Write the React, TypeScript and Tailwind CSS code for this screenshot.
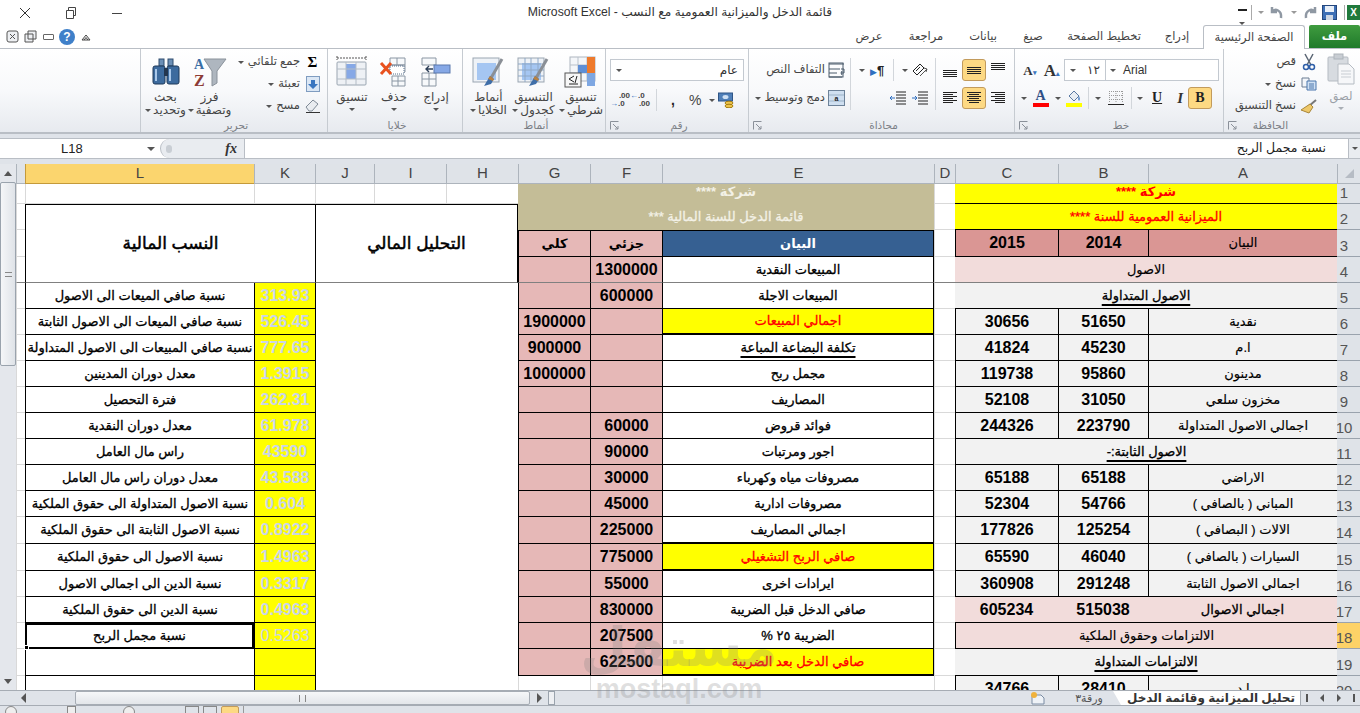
import React from 'react';

const GRID = 'border-b border-l border-[#d9d9d9]';
const BOX = 'border-b border-l border-black';
const NUM = 'text-[16px] font-bold text-black';
const AR = 'text-[13px] text-black [-webkit-text-stroke:0.3px_currentColor]';
const AR_LIGHT = 'text-[13px] text-black [-webkit-text-stroke:0.15px_currentColor]';
const AR_BOLD = 'text-[13px] font-bold text-black';
const UL = 'underline decoration-2 underline-offset-[4px]';

const ratios = [
  ['نسبة صافي الميعات الى الاصول', '313.93'],
  ['نسبة صافي الميعات الى الاصول الثابتة', '526.45'],
  ['نسبة صافي المبيعات الى الاصول المتداولة', '777.65'],
  ['معدل دوران المدينين', '1.3915'],
  ['فترة التحصيل', '262.31'],
  ['معدل دوران النقدية', '61.978'],
  ['راس مال العامل', '43590'],
  ['معدل دوران راس مال العامل', '43.588'],
  ['نسبة الاصول المتداولة الى حقوق الملكية', '0.604'],
  ['نسبة الاصول الثابتة  الى حقوق الملكية', '0.8922'],
  ['نسبة الاصول الى حقوق الملكية', '1.4963'],
  ['نسبة الدين الى اجمالي  الاصول', '0.3317'],
  ['نسبة الدين الى حقوق الملكية', '0.4963'],
  ['نسبة مجمل الربح', '0.5263'],
  ['', ''],
  ['', ''],
];

// E, F, G from row 4 down to row 19; row 20 is empty
const income: [string, string, string, string?][] = [
  ['المبيعات النقدية', '1300000', ''],
  ['المبيعات الاجلة', '600000', ''],
  ['اجمالي المبيعات', '', '1900000', 'total'],
  ['تكلفة البضاعة المباعة', '', '900000', 'line'],
  ['مجمل ربح', '', '1000000'],
  ['المصاريف', '', ''],
  ['فوائد قروض', '60000', ''],
  ['اجور ومرتبات', '90000', ''],
  ['مصروفات مياه وكهرباء', '30000', ''],
  ['مصروفات ادارية', '45000', ''],
  ['اجمالي المصاريف', '225000', '', 'thick'],
  ['صافي الربح التشغيلي', '775000', '', 'total'],
  ['ايرادات اخرى', '55000', ''],
  ['صافي الدخل قبل الضريبة', '830000', ''],
  ['الضريبة ٢٥ %', '207500', ''],
  ['صافي الدخل بعد الضريبة', '622500', '', 'total'],
];

type Bal = { merged?: string; cls?: string; a?: string; b?: string; c?: string; pink?: boolean };
const balance: Bal[] = [
  { a: 'نقدية', b: '51650', c: '30656' },
  { a: 'ا.م', b: '45230', c: '41824' },
  { a: 'مدينون', b: '95860', c: '119738' },
  { a: 'مخزون سلعي', b: '31050', c: '52108' },
  { a: 'اجمالي الاصول المتداولة', b: '223790', c: '244326' },
  { merged: 'الاصول الثابتة:-', cls: `${BOX} bg-[#f2f2f2]` },
  { a: 'الاراضي', b: '65188', c: '65188' },
  { a: 'المباني ( بالصافي )', b: '54766', c: '52304' },
  { a: 'الالات ( البصافي )', b: '125254', c: '177826' },
  { a: 'السيارات ( بالصافي )', b: '46040', c: '65590' },
  { a: 'اجمالي الاصول الثابتة', b: '291248', c: '360908' },
  { a: 'اجمالي الاصوال', b: '515038', c: '605234', pink: true },
  { merged: 'الالتزامات وحقوق الملكية', cls: `${BOX} bg-[#f2dcdb]` },
  { merged: 'الالتزامات المتداولة', cls: 'border-b border-black bg-[#f2f2f2]' },
  { a: 'ا.د', b: '28410', c: '34766' },
];

function Cell({ className = '', children }: { className?: string; children?: React.ReactNode }) {
  return <div className={`flex items-center justify-center overflow-hidden whitespace-nowrap ${className}`}>{children}</div>;
}

function RowHead({ n, active }: { n: number; active?: boolean }) {
  return (
    <div className={`flex items-end overflow-hidden border-b border-[#9aa3ad] ${active ? 'bg-[#fdd267]' : 'bg-[#dfe3e8]'}`}>
      <span dir="ltr" className="w-[32px] shrink-0 text-center text-[15px] leading-[20px] text-[#555]">{n}</span>
    </div>
  );
}

function ColHead({ name, active }: { name: string; active?: boolean }) {
  return (
    <div className={`flex items-center justify-center border-b border-l text-[15px] text-[#444] ${active ? 'border-[#c49a3a] bg-[#fbd56e]' : 'border-[#adb4bc] bg-[#dfe3e8]'}`}>
      {name}
    </div>
  );
}

function Caret({ className = '' }: { className?: string }) {
  return <span className={`inline-block h-0 w-0 shrink-0 border-x-[3px] border-t-[3px] border-x-transparent border-t-[#555] ${className}`} />;
}

function Launcher() {
  return (
    <svg width="9" height="9" viewBox="0 0 9 9" className="shrink-0" fill="none" stroke="#8a9099">
      <path d="M.5 8.5v-8h8M3 3l5 5M8 5v3H5" />
    </svg>
  );
}

function Group({ label, launcher, className, children }: { label: string; launcher?: boolean; className: string; children: React.ReactNode }) {
  return (
    <div className={`flex flex-col border-r border-[#c6cbd1] ${className}`}>
      <div className="h-[70px]">{children}</div>
      <div className="flex h-[13px] items-center pl-[4px]">
        {launcher ? <Launcher /> : <span className="w-[9px]" />}
        <span className="flex-1 pr-[9px] text-center text-[10.5px] text-[#7b7f86]">{label}</span>
      </div>
    </div>
  );
}

function BigBtn({ icon, l1, l2, caretLine, width = 'w-[45px]' }: { icon: React.ReactNode; l1: string; l2?: string; caretLine?: boolean; width?: string }) {
  return (
    <div className={`flex shrink-0 flex-col items-center ${width}`}>
      <div className="flex h-[36px] items-center justify-center">{icon}</div>
      <div className="whitespace-nowrap text-[12px] leading-[14px] text-[#444]">{l1}</div>
      {l2 && (
        <div className="flex items-center gap-[2px] whitespace-nowrap text-[12px] leading-[13px] text-[#444]">
          <Caret />
          <span>{l2}</span>
        </div>
      )}
      {caretLine && <Caret className="mt-[4px]" />}
    </div>
  );
}

function ListRow({ icon, text, caret }: { icon: React.ReactNode; text: string; caret?: boolean }) {
  return (
    <div className="flex h-[22px] items-center justify-end gap-[4px] text-[11.5px] text-[#444]">
      {caret && <Caret />}
      <span className="whitespace-nowrap">{text}</span>
      <span className="flex w-[17px] justify-center">{icon}</span>
    </div>
  );
}

function Lines({ rows }: { rows: [number, number, number][] }) {
  return (
    <svg width="16" height="16" viewBox="0 0 16 16" stroke="#222" strokeWidth="1">
      {rows.map(([y, a, b]) => <path key={y} d={`M${a} ${y + 0.5}H${b}`} />)}
    </svg>
  );
}

function Toggle({ on, children }: { on?: boolean; children: React.ReactNode }) {
  return (
    <div className={`flex h-[22px] w-[24px] items-center justify-center rounded-[3px] ${on ? 'border border-[#c29b5c] bg-[#fdd983]' : ''}`}>
      {children}
    </div>
  );
}

const BrushOver = ({ cells }: { cells?: boolean }) => (
  <svg width="36" height="34" viewBox="0 0 36 34">
    <rect x="2" y="3" width="26" height="24" fill="#eef2f7" stroke="#9aa5b1" />
    <rect x="6" y="8" width="19" height="17" fill="#a5c6f2" />
    {cells && <path d="M2 9h26M2 15h26M2 21h26M9 3v24M15 3v24M22 3v24" stroke="#8fa8c6" fill="none" />}
    <path d="M31 4L20 23" stroke="#8a8f96" strokeWidth="3" />
    <path d="M19 21l4 3-3 5-7 2z" fill="#3f6ea8" />
    <path d="M19 21l4 3-1 2-5-2z" fill="#b98140" />
  </svg>
);

function Ribbon() {
  return (
    <div className="flex h-[85px] border-b-2 border-[#b9bec5] bg-gradient-to-b from-white via-[#f8f9fb] to-[#e7eaef]">
      <div className="w-[141px] border-r border-[#c6cbd1]" />

      <Group label="تحرير" className="w-[187px]">
        <div className="flex pl-[2px] pt-[5px]">
          <BigBtn
            l1="بحث"
            l2="وتحديد"
            icon={
              <svg width="30" height="28" viewBox="0 0 30 28">
                <rect x="8" y="1" width="5" height="7" fill="#6b8fb6" stroke="#2f4c6e" />
                <rect x="17" y="1" width="5" height="7" fill="#6b8fb6" stroke="#2f4c6e" />
                <rect x="2" y="8" width="12" height="18" rx="2" fill="#3d6b9e" stroke="#1f3a5a" />
                <rect x="16" y="8" width="12" height="18" rx="2" fill="#3d6b9e" stroke="#1f3a5a" />
                <rect x="13" y="10" width="4" height="8" fill="#23364e" />
                <path d="M5 11v12M19 11v12" stroke="#a9c8ea" strokeWidth="2" />
              </svg>
            }
          />
          <BigBtn
            width="w-[43px]"
            l1="فرز"
            l2="وتصفية"
            icon={
              <svg width="34" height="32" viewBox="0 0 34 32">
                <path d="M11 3h22L24 15v12l-5 3V15z" fill="#aeb6bf" stroke="#8a929b" />
                <text x="1" y="13" fontSize="14" fontWeight="700" fontFamily="Liberation Serif" fill="#3a6ea5">A</text>
                <text x="1" y="30" fontSize="16" fontWeight="700" fontFamily="Liberation Serif" fill="#8c3b36">Z</text>
              </svg>
            }
          />
          <div className="-mt-[3px] flex-1 pr-[6px]">
            <ListRow text="جمع تلقائي" caret icon={<span className="font-['Liberation_Serif'] text-[15px] font-bold leading-none text-black">Σ</span>} />
            <ListRow
              text="تعبئة"
              caret
              icon={
                <svg width="14" height="16" viewBox="0 0 14 16">
                  <rect x=".5" y=".5" width="13" height="15" fill="#dbe7f5" stroke="#7f9cc0" />
                  <path d="M5 4h4v4h3l-5 5-5-5h3z" fill="#3a76c0" />
                </svg>
              }
            />
            <ListRow
              text="مسح"
              caret
              icon={
                <svg width="16" height="14" viewBox="0 0 16 14">
                  <path d="M1 8l7-7 5 4-6 7H4z" fill="#e9ecf0" stroke="#7f8a96" />
                  <path d="M1 13.5h14" stroke="#333" />
                </svg>
              }
            />
          </div>
        </div>
      </Group>

      <Group label="خلايا" className="w-[135px]">
        <div className="flex pl-[3px] pt-[5px]">
          <BigBtn
            width="w-[42px]"
            l1="تنسيق"
            caretLine
            icon={
              <svg width="36" height="34" viewBox="0 0 36 34">
                <path d="M3 3h29M3 1v4M32 1v4" stroke="#555" strokeDasharray="2 1" fill="none" />
                <rect x="3" y="7" width="29" height="23" fill="#eef1f5" stroke="#9aa5b1" rx="1" />
                <rect x="12" y="9" width="10" height="15" fill="#86a8e6" />
                <path d="M3 14h29M3 24h29M12 7v23M22 7v23" stroke="#b3bcc6" fill="none" />
              </svg>
            }
          />
          <BigBtn
            width="w-[42px]"
            l1="حذف"
            caretLine
            icon={
              <svg width="32" height="32" viewBox="0 0 32 32">
                <path d="M12 2h15v7H12zM12 9h15v7H12zM14 20h13v10H14zM20 20v10M14 25h13M19 2v7" fill="#f7f9fb" stroke="#8a96a3" />
                <rect x="12" y="10" width="14" height="8" fill="#fff" stroke="#58708c" strokeDasharray="1 1" />
                <path d="M3 7l10 11M13 7L3 18" stroke="#e8511e" strokeWidth="3" />
              </svg>
            }
          />
          <BigBtn
            width="w-[42px]"
            l1="إدراج"
            caretLine
            icon={
              <svg width="32" height="32" viewBox="0 0 32 32">
                <path d="M2 2h14v7H2zM2 17h14v13H2zM2 23h14M9 17v13" fill="#f7f9fb" stroke="#8a96a3" />
                <rect x="14" y="9" width="16" height="8" fill="#86a8e6" stroke="#5a79ad" />
                <path d="M6 13h7M9 10l-3 3 3 3" stroke="#2c3e57" fill="none" strokeWidth="1.4" />
              </svg>
            }
          />
        </div>
      </Group>

      <Group label="أنماط" className="w-[143px]">
        <div className="flex pl-[3px] pt-[5px]">
          <BigBtn l1="أنماط" l2="الخلايا" icon={<BrushOver />} />
          <BigBtn l1="التنسيق" l2="كجدول" icon={<BrushOver cells />} />
          <BigBtn
            width="w-[50px]"
            l1="تنسيق"
            l2="شرطي"
            icon={
              <svg width="34" height="34" viewBox="0 0 34 34">
                <rect x="6" y="2" width="25" height="24" fill="#f4f6f9" stroke="#aeb6c0" />
                <path d="M6 10h25M6 18h25M14 2v24M23 2v24" stroke="#b9c1ca" />
                <rect x="23" y="2" width="8" height="8" fill="#ee7a2c" />
                <rect x="14" y="10" width="17" height="8" fill="#ee7a2c" />
                <rect x="14" y="10" width="9" height="8" fill="#5f8fd6" />
                <rect x="23" y="18" width="8" height="13" fill="#7ea7e2" />
                <rect x="1" y="18" width="16" height="14" fill="#f7f7f7" stroke="#555" />
                <path d="M10 21l-5 3 5 3M5 29h9M13 21l-2 7" stroke="#222" fill="none" />
              </svg>
            }
          />
        </div>
      </Group>

      <Group label="رقم" launcher className="w-[143px]">
        <div className="flex flex-col px-[4px] pt-[10px]">
          <div className="flex h-[22px] w-[134px] items-center justify-between border border-[#c3c9d0] bg-white px-[5px] text-[12px] text-[#333]">
            <Caret />
            <span>عام</span>
          </div>
          <div className="mt-[8px] flex h-[22px] items-center">
            <span className="flex w-[20px] flex-col text-[8px] font-bold leading-[8px] text-[#444]">
              <span className="text-right">.00</span>
              <span><span className="text-[#2f6fc0]">→</span>.0</span>
            </span>
            <span className="flex w-[20px] flex-col text-[8px] font-bold leading-[8px] text-[#444]">
              <span><span className="text-[#2f6fc0]">←</span>.0</span>
              <span className="text-right">.00</span>
            </span>
            <span className="ml-[6px] h-[22px] w-px bg-[#d2d6db]" />
            <span className="ml-[14px] text-[14px] font-bold leading-none text-[#222]">,</span>
            <span className="ml-[14px] text-[14px] leading-none text-[#444]">%</span>
            <Caret className="ml-[8px]" />
            <svg width="16" height="16" viewBox="0 0 16 16" className="ml-[3px]">
              <rect x=".5" y="1" width="14" height="8" fill="#4f7fb8" stroke="#2f5586" />
              <ellipse cx="7.5" cy="5" rx="3" ry="2" fill="#cfe0f3" />
              <ellipse cx="11" cy="11" rx="4" ry="1.8" fill="#eec44a" stroke="#a67d10" />
              <ellipse cx="11" cy="14" rx="4" ry="1.8" fill="#eec44a" stroke="#a67d10" />
            </svg>
          </div>
        </div>
      </Group>

      <Group label="محاذاة" launcher className="w-[266px]">
        <div className="flex pt-[9px]">
          <div className="h-[52px] w-[102px] border-r border-[#d2d6db] pr-[5px]">
            <div className="flex h-[24px] items-center justify-end gap-[3px] text-[11.5px] text-[#444]">
              <span className="whitespace-nowrap">التفاف النص</span>
              <svg width="17" height="16" viewBox="0 0 17 16" stroke="#4a5a6b" fill="none">
                <path d="M1 2h15M1 7h11M1 11h8M1 15h13" />
                <rect x="1" y="1" width="14" height="14" />
                <path d="M13 7h3v4h-3M14 9l-1 2 1 2" />
              </svg>
            </div>
            <div className="mt-[4px] flex h-[24px] items-center justify-end gap-[3px] text-[11.5px] text-[#444]">
              <Caret />
              <span className="whitespace-nowrap">دمج وتوسيط</span>
              <svg width="17" height="16" viewBox="0 0 17 16">
                <rect x=".5" y=".5" width="16" height="15" fill="#cfdff0" stroke="#6d8299" />
                <path d="M1 5h15M1 11h15" stroke="#9db3c8" />
                <text x="8.5" y="10.5" fontSize="7" fontWeight="700" textAnchor="middle" fill="#222">a</text>
              </svg>
            </div>
          </div>
          <div className="flex h-[52px] w-[85px] flex-col border-r border-[#d2d6db] pl-[8px]">
            <div className="flex h-[24px] items-center">
              <Caret className="mr-[3px]" />
              <span className="ml-[2px] text-[13px] font-bold leading-none text-[#222]"><span className="text-[9px] text-[#2f6fc0]">▶</span>¶</span>
              <span className="ml-[9px] h-[22px] w-px bg-[#d2d6db]" />
              <Caret className="ml-[8px]" />
              <svg width="18" height="16" viewBox="0 0 18 16" className="ml-[3px]" fill="none" stroke="#222">
                <path d="M2 9l7-7 4 4-7 7zM5 9l4-4" />
                <path d="M9 14l7-7M13 6l3 1-1 3" stroke="#555" />
              </svg>
            </div>
            <div className="mt-[4px] flex h-[24px] items-center justify-end gap-[5px] pr-[7px]">
              <svg width="17" height="16" viewBox="0 0 17 16" stroke="#222"><path d="M7 2h10M7 5h10M7 8h10M7 11h10M7 14h10" /><path d="M6 8H1M3 6L1 8l2 2" stroke="#2f6fc0" fill="none" /></svg>
              <svg width="17" height="16" viewBox="0 0 17 16" stroke="#222"><path d="M7 2h10M7 5h10M7 8h10M7 11h10M7 14h10" /><path d="M1 8h5M4 6l2 2-2 2" stroke="#2f6fc0" fill="none" /></svg>
            </div>
          </div>
          <div className="flex w-[78px] flex-col pl-[2px]">
            <div className="flex h-[24px] items-center">
              <Toggle><Lines rows={[[8, 1, 15], [10, 1, 15], [12, 1, 15], [14, 1, 15]]} /></Toggle>
              <Toggle on><Lines rows={[[5, 1, 15], [7, 1, 15], [9, 1, 15], [11, 1, 15]]} /></Toggle>
              <Toggle><Lines rows={[[1, 1, 15], [3, 1, 15], [5, 1, 15], [7, 1, 15]]} /></Toggle>
            </div>
            <div className="mt-[4px] flex h-[24px] items-center">
              <Toggle><Lines rows={[[2, 1, 15], [4, 1, 11], [6, 1, 15], [8, 1, 11], [10, 1, 15], [12, 1, 11]]} /></Toggle>
              <Toggle on><Lines rows={[[2, 1, 15], [4, 3, 13], [6, 1, 15], [8, 3, 13], [10, 1, 15], [12, 3, 13]]} /></Toggle>
              <Toggle><Lines rows={[[2, 1, 15], [4, 5, 15], [6, 1, 15], [8, 5, 15], [10, 1, 15], [12, 5, 15]]} /></Toggle>
            </div>
          </div>
        </div>
      </Group>

      <Group label="خط" launcher className="w-[209px]">
        <div className="flex flex-col pt-[9px]">
          <div className="flex h-[24px] items-center pl-[5px]">
            <span className="relative w-[20px] text-center font-['Liberation_Serif'] text-[13px] font-bold leading-none text-[#333]">A<span className="text-[7px] text-[#3a76c0]">▾</span></span>
            <span className="ml-[1px] w-[22px] text-center font-['Liberation_Serif'] text-[17px] font-bold leading-none text-[#333]">A<span className="text-[7px] text-[#3a76c0]">▴</span></span>
            <div className="ml-[1px] flex h-[22px] w-[42px] items-center justify-between border border-[#c3c9d0] bg-white px-[5px] text-[12px] text-[#333]">
              <Caret />
              <span>١٢</span>
            </div>
            <div className="flex h-[22px] w-[113px] items-center gap-[7px] border-y border-r border-[#c3c9d0] bg-white px-[4px] text-[12px] text-[#333]">
              <Caret />
              <span>Arial</span>
            </div>
          </div>
          <div className="mt-[4px] flex h-[24px] items-center pl-[6px]">
            <Caret />
            <span className="ml-[5px] flex w-[17px] flex-col items-center">
              <span className="font-['Liberation_Serif'] text-[14px] font-bold leading-[14px] text-[#2f4f86]">A</span>
              <span className="h-[4px] w-[16px] bg-[#ff0000]" />
            </span>
            <Caret className="ml-[6px]" />
            <span className="ml-[4px] flex w-[17px] flex-col items-center">
              <svg width="14" height="14" viewBox="0 0 14 14"><path d="M2 7l5-5 5 5-5 5z" fill="#e9eef4" stroke="#5b7aa3" /><path d="M12 7c1 2 1 4 0 5-1-1-1-3 0-5z" fill="#3a76c0" /></svg>
              <span className="h-[4px] w-[16px] bg-[#ffff00]" />
            </span>
            <span className="ml-[6px] h-[22px] w-px bg-[#d2d6db]" />
            <Caret className="ml-[6px]" />
            <svg width="16" height="16" viewBox="0 0 16 16" className="ml-[7px]" fill="none">
              <path d="M1 1.5h14M1 5.5h14M1 9.5h14M1.5 1v12M8 1v12M14.5 1v12" stroke="#999" strokeDasharray="1 1" />
              <path d="M0 14.5h16" stroke="#222" />
            </svg>
            <span className="ml-[7px] h-[22px] w-px bg-[#d2d6db]" />
            <Caret className="ml-[5px]" />
            <span className="ml-[9px] font-['Liberation_Serif'] text-[14px] font-bold leading-none text-[#222] underline">U</span>
            <span className="ml-[15px] font-['Liberation_Serif'] text-[15px] font-bold italic leading-none text-[#333]">I</span>
            <span className="ml-[5px]"><Toggle on><span className="font-['Liberation_Serif'] text-[14px] font-bold leading-none text-[#222]">B</span></Toggle></span>
          </div>
        </div>
      </Group>

      <div className="flex w-[136px] flex-col">
        <div className="flex h-[70px] pt-[2px]">
          <div className="flex-1 pr-[5px]">
            <ListRow
              text="قص"
              icon={
                <svg width="14" height="18" viewBox="0 0 14 18" fill="none">
                  <path d="M3 1l6 11M11 1L5 12" stroke="#5a6573" strokeWidth="1.5" />
                  <circle cx="4" cy="14" r="2.5" stroke="#2f5fa8" strokeWidth="1.5" />
                  <circle cx="10" cy="14" r="2.5" stroke="#2f5fa8" strokeWidth="1.5" />
                </svg>
              }
            />
            <ListRow
              text="نسخ"
              caret
              icon={
                <svg width="16" height="14" viewBox="0 0 16 14">
                  <path d="M1 1h7v9H1z" fill="#f2f5f9" stroke="#6a7d93" />
                  <path d="M6 4h9v9H6z" fill="#cfe0f3" stroke="#4a76ad" />
                  <path d="M8 7h5M8 9h5M8 11h5" stroke="#4a76ad" />
                </svg>
              }
            />
            <ListRow
              text="نسخ التنسيق"
              icon={
                <svg width="17" height="15" viewBox="0 0 17 15">
                  <path d="M16 1L9 7" stroke="#777" strokeWidth="2" />
                  <path d="M10 5l3 3-4 6-8-3z" fill="#eec86a" stroke="#a98638" />
                </svg>
              }
            />
          </div>
          <div className="flex w-[38px] shrink-0 flex-col items-center">
            <svg width="28" height="32" viewBox="0 0 28 32" className="mt-[2px]">
              <rect x="1" y="4" width="20" height="24" rx="1" fill="#d7dbe0" stroke="#b5bbc2" />
              <rect x="7" y="1" width="9" height="5" fill="#c8cdd3" stroke="#adb3ba" />
              <path d="M11 11h11l5 5v15H11z" fill="#f6f7f9" stroke="#b5bbc2" />
              <path d="M14 18h10M14 21h10M14 24h10" stroke="#c8cdd3" />
            </svg>
            <span className="mt-[5px] text-[11.5px] leading-[13px] text-[#9aa0a7]">لصق</span>
            <Caret className="mt-[4px] border-t-[#a9aeb5]" />
          </div>
        </div>
        <div className="flex h-[13px] items-center pl-[4px]">
          <Launcher />
          <span className="flex-1 pr-[56px] text-center text-[10.5px] text-[#7b7f86]">الحافظة</span>
        </div>
      </div>
    </div>
  );
}

function Sheet() {
  return (
    <div className="flex h-[526px] overflow-hidden">
      {/* vertical scrollbar on the left, the sheet reads right to left */}
      <div className="flex w-[16px] shrink-0 flex-col bg-[#e4e7ec]">
        <div className="flex h-[18px] items-center justify-center"><span className="h-0 w-0 border-x-[4px] border-b-[5px] border-x-transparent border-b-[#555]" /></div>
        <div className="flex h-[184px] items-center justify-center rounded-[2px] border border-[#9aa3ad] bg-gradient-to-r from-[#f5f6f8] to-[#dfe3e8]">
          <span className="h-[5px] w-[7px] border-y border-[#888]" />
        </div>
        <div className="flex-1" />
        <div className="flex h-[18px] items-center justify-center"><span className="h-0 w-0 border-x-[4px] border-t-[5px] border-x-transparent border-t-[#555]" /></div>
      </div>

      <div
        dir="rtl"
        className="grid flex-1 grid-cols-[23px_189px_90px_103px_21px_272px_72px_72px_72px_72px_59px_61px_229px_9px] grid-rows-[20px_20px_26px_27px_26px_26px_26px_26px_26px_26px_26px_26px_26px_26px_27px_27px_26px_26px_26px_27px_26px] bg-white"
      >
        {/* column letters */}
        <div className="flex items-center justify-center border-b border-l border-[#adb4bc] bg-[#dfe3e8]">
          <span className="border-b-[9px] border-l-[9px] border-b-[#b6bcc4] border-l-transparent" />
        </div>
        {['A', 'B', 'C', 'D', 'E', 'F', 'G', 'H', 'I', 'J', 'K'].map((c) => <ColHead key={c} name={c} />)}
        <ColHead name="L" active />
        <ColHead name="" />

        {/* row 1 */}
        <RowHead n={1} />
        <Cell className={`col-span-3 border-b border-black bg-[#ffff00] ${AR_BOLD} !text-[#ff0000]`}><span className="-mt-[4px]">شركة ****</span></Cell>
        <Cell className={GRID} />
        <Cell className="col-span-3 bg-[#c4bd97] text-[13px] font-bold text-[#f3f1e6]"><span className="-mt-[4px]">شركة ****</span></Cell>
        <Cell className={GRID} /><Cell className={GRID} /><Cell className={GRID} />
        <Cell className={GRID} /><Cell className={GRID} /><Cell className={GRID} />

        {/* row 2 */}
        <RowHead n={2} />
        <Cell className={`col-span-3 border-b border-black bg-[#ffff00] ${AR} !text-[#ff0000]`}>الميزانية العمومية للسنة ****</Cell>
        <Cell className={GRID} />
        <Cell className="col-span-3 bg-[#c4bd97] text-[13px] text-[#f3f1e6] [-webkit-text-stroke:0.3px_currentColor]">قائمة الدخل للسنة المالية ***</Cell>
        <Cell className="col-span-3 row-span-3 border-x border-t border-black border-b border-b-[#808080] text-[17px] text-black [-webkit-text-stroke:0.5px_currentColor]">التحليل المالي</Cell>
        <Cell className="col-span-2 row-span-3 border-l border-t border-black border-b border-b-[#808080] text-[17px] text-black [-webkit-text-stroke:0.5px_currentColor]">النسب المالية</Cell>
        <Cell className={GRID} />

        {/* row 3 */}
        <RowHead n={3} />
        <Cell className={`${BOX} bg-[#da9694] ${AR_LIGHT}`}>البيان</Cell>
        <Cell className={`${BOX} bg-[#da9694] ${NUM}`}>2014</Cell>
        <Cell className={`${BOX} bg-[#da9694] ${NUM}`}>2015</Cell>
        <Cell className={GRID} />
        <Cell className={`${BOX} border-x border-t bg-[#366092] text-[13px] font-bold text-white`}>البيان</Cell>
        <Cell className={`${BOX} border-t bg-[#e6b8b7] ${AR_BOLD}`}>جزئي</Cell>
        <Cell className={`${BOX} border-t bg-[#e6b8b7] ${AR_BOLD}`}>كلي</Cell>
        <Cell className={GRID} />

        {/* row 4, the frozen panes end under it */}
        <RowHead n={4} />
        <Cell className={`col-span-3 border-b border-b-[#808080] bg-[#f2dcdb] ${AR_LIGHT}`}>الاصول</Cell>
        <Cell className="border-b border-l border-[#d9d9d9] border-b-[#808080]" />
        <Cell className={`border-b border-l border-r border-black border-b-[#808080] bg-white ${AR}`}>المبيعات النقدية</Cell>
        <Cell className={`border-b border-l border-black border-b-[#808080] bg-[#e6b8b7] ${NUM}`}>1300000</Cell>
        <Cell className="border-b border-l border-black border-b-[#808080] bg-[#e6b8b7]" />
        <Cell className="border-b border-l border-[#d9d9d9] border-b-[#808080]" />

        {/* row 5 */}
        <RowHead n={5} />
        <Cell className={`col-span-3 border-b border-black bg-[#f2f2f2] ${AR} ${UL}`}>الاصول المتداولة</Cell>
        <Cell className={GRID} />
        <Cell className={`${BOX} border-r bg-white ${AR}`}>{income[1][0]}</Cell>
        <Cell className={`${BOX} bg-[#e6b8b7] ${NUM}`}>{income[1][1]}</Cell>
        <Cell className={`${BOX} bg-[#e6b8b7]`} />
        <Cell className="col-span-3 row-span-16 border-l border-black bg-white" />
        <Cell className={`${BOX} bg-[#ffff00] ${NUM} !text-[#c9d5e8]`}>{ratios[0][1]}</Cell>
        <Cell className={`${BOX} ${AR}`}>{ratios[0][0]}</Cell>
        <Cell className={GRID} />

        {/* rows 6 to 20 */}
        {balance.map((bal, i) => {
          const inc = income[i + 2] as [string, string, string, string?] | undefined;
          const ratio = ratios[i + 1];
          const rowNo = i + 6;
          const selected = rowNo === 18;
          const kind = inc?.[3];
          const eCls =
            kind === 'total'
              ? `border-b-2 border-l border-r border-black bg-[#ffff00] ${AR} !text-[#ff0000]`
              : kind === 'thick'
                ? `border-b-2 border-l border-r border-black bg-white ${AR}`
                : kind === 'line'
                  ? `${BOX} border-r bg-white ${AR} ${UL}`
                  : inc
                    ? `${BOX} border-r bg-white ${AR}`
                    : GRID;
          return (
            <React.Fragment key={rowNo}>
              <RowHead n={rowNo} active={selected} />
              {bal.merged ? (
                <Cell className={`col-span-3 ${bal.cls} ${bal.merged.startsWith('الالتزامات وحقوق') ? AR_LIGHT : `${AR} ${UL}`}`}>{bal.merged}</Cell>
              ) : bal.pink ? (
                <>
                  <Cell className={`border-b border-black bg-[#f2dcdb] ${AR}`}>{bal.a}</Cell>
                  <Cell className={`border-b border-black bg-[#f2dcdb] ${NUM}`}>{bal.b}</Cell>
                  <Cell className={`border-b border-black bg-[#f2dcdb] ${NUM}`}>{bal.c}</Cell>
                </>
              ) : (
                <>
                  <Cell className={`${BOX} bg-[#f2f2f2] ${AR_LIGHT}`}>{bal.a}</Cell>
                  <Cell className={`${BOX} bg-[#f2f2f2] ${NUM}`}>{bal.b}</Cell>
                  <Cell className={`${BOX} bg-[#f2f2f2] ${NUM}`}>{bal.c}</Cell>
                </>
              )}
              <Cell className={GRID} />
              <Cell className={eCls}>{inc?.[0]}</Cell>
              <Cell className={inc ? `${BOX} bg-[#e6b8b7] ${NUM}` : GRID}>{inc?.[1]}</Cell>
              <Cell className={inc ? `${BOX} bg-[#e6b8b7] ${NUM}` : GRID}>{inc?.[2]}</Cell>
              <Cell className={`${BOX} bg-[#ffff00] text-[16px] text-[#c9d5e8] ${selected ? 'font-normal' : 'font-bold'}`}>{ratio[1]}</Cell>
              {selected ? (
                <div className={`relative flex items-center justify-center border-2 border-black ${AR}`}>
                  {ratio[0]}
                  <span className="absolute -bottom-[3px] -left-[3px] h-[5px] w-[5px] border border-white bg-black" />
                </div>
              ) : (
                <Cell className={`${BOX} ${AR}`}>{ratio[0]}</Cell>
              )}
              <Cell className={GRID} />
            </React.Fragment>
          );
        })}
      </div>
    </div>
  );
}

function BottomBar() {
  return (
    <>
      <div className="flex h-[16px] border-y border-[#a6acb4] bg-[#dfe3e9]">
        <div className="w-[16px]" />
        <div className="flex w-[59px] items-center pl-[5px]"><span className="h-0 w-0 border-y-[5px] border-r-[5px] border-y-transparent border-r-[#555]" /></div>
        <div className="flex w-[455px] items-center justify-center rounded-[2px] border border-[#a6acb4] bg-gradient-to-b from-[#f6f7f9] to-[#e3e6ea]">
          <span className="h-[7px] w-[7px] border-x border-[#888]" />
        </div>
        <div className="flex w-[18px] items-center justify-center"><span className="h-0 w-0 border-y-[5px] border-l-[5px] border-y-transparent border-l-[#555]" /></div>
        <div className="h-[14px] w-[7px] border border-[#9aa3ad] bg-[#eef0f3]" />
        <div className="flex-1" />
        <div className="flex h-[14px] w-[36px] items-center justify-center">
          <svg width="16" height="14" viewBox="0 0 16 14">
            <path d="M3 4h9l3 3v6H3z" fill="#eef2f7" stroke="#7a8ca3" />
            <circle cx="5" cy="4" r="3" fill="#f0b23c" />
          </svg>
        </div>
        <div className="flex w-[58px] items-center justify-center pl-[10px] text-[11px] leading-none text-[#555]">ورقة٣</div>
        <div className="flex h-[14px] w-[187px] items-center justify-end bg-white pr-[5px] text-[12px] font-bold leading-none text-[#333] [clip-path:polygon(0_0,100%_0,100%_100%,8px_100%)]">
          تحليل الميزانية وقائمة الدخل
        </div>
        <div className="flex w-[60px] items-center justify-between border-l border-[#a6acb4] px-[5px]">
          <span className="h-[8px] border-l-2 border-[#555]" />
          <span className="h-0 w-0 border-y-[4px] border-r-[4px] border-y-transparent border-r-[#555]" />
          <span className="h-0 w-0 border-y-[4px] border-l-[4px] border-y-transparent border-l-[#555]" />
          <span className="h-[8px] border-r-2 border-[#555]" />
        </div>
      </div>
      <div className="flex h-[7px] items-start overflow-hidden bg-[#dfe3e9] pl-[5px]">
        <span className="h-[12px] w-[12px] rounded-full border border-[#888] bg-[#eee]" />
        <span className="ml-[50px] h-[12px] w-[9px] border border-[#888] bg-[#eee]" />
        <span className="ml-[47px] h-[12px] w-[12px] rounded-full border border-[#888] bg-[#eee]" />
        <span className="ml-[50px] h-[12px] w-[14px] border border-[#888]" />
        <span className="ml-[4px] h-[12px] w-[14px] border border-[#888]" />
        <span className="ml-[4px] h-[12px] w-[18px] rounded-[2px] border border-[#c29b5c] bg-[#fdd983]" />
        <span className="ml-[4px] h-[12px] w-px bg-[#999]" />
      </div>
    </>
  );
}

export default function App() {
  const tabs = [
    ['عرض', 'w-[52px]'],
    ['مراجعة', 'w-[62px]'],
    ['بيانات', 'w-[52px]'],
    ['صيغ', 'w-[48px]'],
    ['تخطيط الصفحة', 'w-[94px]'],
    ['إدراج', 'w-[52px]'],
  ];
  return (
    <div className="relative h-[713px] w-[1360px] overflow-hidden bg-white font-['Liberation_Sans','DejaVu_Sans',sans-serif]">
      {/* title bar */}
      <div className="grid h-[25px] grid-cols-[1fr_auto_1fr] items-center">
        <div className="flex items-center pl-[18px]">
          <svg width="14" height="14" viewBox="0 0 14 14" stroke="#333" fill="none"><path d="M2 2l10 10M12 2L2 12" /></svg>
          <svg width="12" height="12" viewBox="0 0 12 12" stroke="#444" fill="none" className="ml-[33px]"><path d="M1.5 3.5h7v8h-7zM3.5 3V.5h7v8H9" /></svg>
          <span className="ml-[35px] mt-[2px] h-px w-[10px] bg-[#444]" />
        </div>
        <div dir="rtl" className="text-[12.2px] text-[#333]">قائمة الدخل والميزانية العمومية مع النسب - Microsoft Excel</div>
        <div className="flex items-center justify-end">
          <span className="h-[8px] w-[9px] border-t-2 border-[#222]"><Caret className="mb-[3px] ml-[1px] border-t-[#222]" /></span>
          <span className="ml-[4px] h-[15px] w-px bg-[#aaa]" />
          <Caret className="ml-[6px] border-t-[#999]" />
          <svg width="16" height="15" viewBox="0 0 16 15" fill="none" stroke="#8f98a3" strokeWidth="2.5" className="ml-[5px]"><path d="M3 2v5h5M3 7c3-4 10-2 9 6" /></svg>
          <Caret className="ml-[6px] border-t-[#999]" />
          <svg width="14" height="15" viewBox="0 0 14 15" fill="none" stroke="#8f98a3" strokeWidth="2.5" className="ml-[6px]"><path d="M12 2v5H7M12 7C9 3 2 5 3 13" /></svg>
          <svg width="15" height="15" viewBox="0 0 15 15" className="ml-[5px]">
            <rect x=".5" y=".5" width="14" height="14" fill="#3d6fb5" stroke="#24477d" />
            <rect x="3" y="1" width="9" height="6" fill="#e8eff8" />
            <rect x="4" y="10" width="7" height="5" fill="#cdd6e2" />
          </svg>
          <span className="ml-[7px] h-[15px] w-px bg-[#aaa]" />
          <span className="ml-[2px] flex h-[15px] w-[13px] items-center justify-center bg-[#207a3c] text-[10px] font-bold text-white">X</span>
        </div>
      </div>

      {/* tabs row */}
      <div className="flex h-[23px] items-end">
        <div className="flex h-[23px] w-[120px] items-center pl-[6px]">
          <svg width="13" height="13" viewBox="0 0 13 13" stroke="#555" fill="#eef0f3"><rect x="1" y="1" width="11" height="11" rx="2" /><path d="M4 4l5 5M9 4L4 9" /></svg>
          <svg width="13" height="13" viewBox="0 0 13 13" stroke="#555" fill="#eef0f3" className="ml-[5px]"><path d="M4 1h8v8H4zM1 4h8v8H1z" /></svg>
          <span className="ml-[6px] h-[6px] w-[11px] rounded-[1px] border border-[#666]" />
          <span className="ml-[5px] flex h-[16px] w-[16px] items-center justify-center rounded-full bg-[#3f80c9] text-[12px] font-bold text-white">?</span>
          <svg width="10" height="8" viewBox="0 0 10 8" fill="none" stroke="#444" className="ml-[6px]"><path d="M1 7l4-5 4 5zM3 7l2-2.5L7 7" /></svg>
        </div>
        <div className="flex-1" />
        {tabs.map(([t, w]) => (
          <div key={t} className={`flex h-[23px] items-center justify-center text-[11.5px] text-[#444] ${w}`}>{t}</div>
        ))}
        <div className="z-10 -mb-px flex h-[24px] w-[102px] items-center justify-center rounded-t-[3px] border-x border-t border-[#b9bec5] bg-white text-[11.5px] text-[#444]">الصفحة الرئيسية</div>
        <div className="ml-[4px] flex h-[23px] w-[51px] items-center justify-center rounded-t-[2px] bg-gradient-to-b from-[#3f9c3f] to-[#1f7a2b] text-[11.5px] font-bold text-white">ملف</div>
      </div>

      <div className="border-t border-[#b9bec5]">
        <Ribbon />
      </div>

      {/* formula bar */}
      <div className="flex h-[30px] bg-[#dfe3e9] pt-[4px]">
        <div className="flex h-[21px] flex-1 border-y border-[#b9bec5] bg-white">
          <div className="flex w-[160px] items-center justify-between pl-[61px] pr-[5px] text-[13px] text-[#222]">
            L18
            <Caret className="border-x-[4px] border-t-[4px] border-t-[#333]" />
          </div>
          <div className="flex w-[85px] items-center rounded-l-[10px] border-x border-[#b9bec5] bg-[#e9ecf0] pl-[5px]">
            <span className="h-[8px] w-[6px] rounded-full bg-[#c9ced4]" />
            <span className="ml-auto pr-[7px] font-['Liberation_Serif'] text-[14px] font-bold italic leading-none text-[#333]">fx</span>
          </div>
          <div className="flex-1 pr-[22px] text-right text-[12.5px] leading-[19px] text-[#222]">
            <span dir="rtl">نسبة مجمل الربح</span>
          </div>
          <div className="flex w-[12px] items-center justify-center border-l border-[#b9bec5] bg-[#e9ecf0]"><Caret className="border-t-[#333]" /></div>
        </div>
      </div>

      <Sheet />
      <BottomBar />

      {/* mostaql watermark */}
      <div dir="rtl" className="pointer-events-none absolute left-[597px] top-[618px] flex w-[164px] flex-col items-center text-[#808080]/25">
        <span className="text-[54px] font-bold leading-[58px]">مستقل</span>
        <span dir="ltr" className="text-[27px] font-bold leading-[27px]">mostaql.com</span>
      </div>
    </div>
  );
}
